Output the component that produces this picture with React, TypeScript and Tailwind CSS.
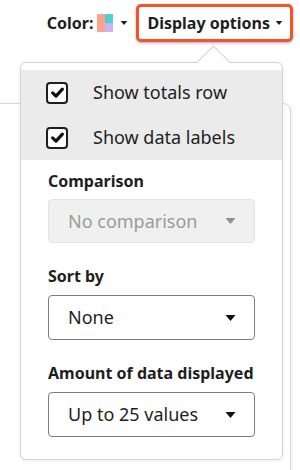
const Caret = ({className = ""}: {className?: string}) => (
  <svg viewBox="0 0 10 6" className={className} fill="currentColor">
    <path d="M0 0h10L5 6z" />
  </svg>
)

type SelectProps = {
  value: string
  disabled?: boolean
}

function Select({value, disabled}: SelectProps) {
  return (
    <div
      className={
        disabled
          ? "flex h-[44px] items-center justify-between rounded-[4px] border border-[#e3e3e3] bg-[#f0f0f0] pl-[19px] pr-[17px] text-[#9b9b9b]"
          : "flex h-[45px] items-center justify-between rounded-[4px] border border-[#7d7d7d] bg-white pl-[19px] pr-[17px] text-[#1e1e1e]"
      }
    >
      <span className="text-[18px]">{value}</span>
      <Caret className={disabled ? "h-[6px] w-[13px] text-[#8f8f8f]" : "h-[6px] w-[13px] text-[#111]"} />
    </div>
  )
}

function CheckRow({label}: {label: string}) {
  return (
    <div className="flex h-[45px] items-center pl-[25px]">
      <div className="flex h-[22px] w-[22px] items-center justify-center rounded-[4px] border-2 border-[#1e1e1e] bg-white">
        <svg viewBox="0 0 16 16" className="h-[15px] w-[15px]">
          <path
            d="M2.8 8.4 6.4 11.8 13.2 4.4"
            fill="none"
            stroke="#111"
            strokeWidth={3.4}
            strokeLinecap="round"
            strokeLinejoin="round"
          />
        </svg>
      </div>
      <span className="ml-[25px] text-[18px] text-[#1e1e1e]">{label}</span>
    </div>
  )
}

export default function App() {
  return (
    <div
      className="relative h-[470px] w-[300px] overflow-hidden bg-white text-[#1e1e1e]"
      style={{fontFamily: '"Noto Sans", "Open Sans", sans-serif'}}
    >
      {/* top bar */}
      <div className="flex h-[103px] items-start justify-end pr-[7px] pt-[4px]">
        <div className="flex h-[38px] items-center">
          <span className="text-[16px] font-bold">Color:</span>
          <div className="ml-[4px] flex h-[18px] w-[16px]">
            <div className="w-[8px] bg-[#fba489]" />
            <div className="flex w-[8px] flex-col">
              <div className="h-[9px] bg-[#4dd3ce]" />
              <div className="h-[9px] bg-[#c7b5f4]" />
            </div>
          </div>
          <Caret className="ml-[7px] h-[4px] w-[8px] text-[#1e1e1e]" />
        </div>
        <button className="ml-[8px] flex h-[38px] items-center rounded-[5px] border-[3px] border-[#f2552c] bg-white pl-[8px] pr-[7px] shadow-[0_1px_3px_rgba(0,0,0,0.35)]">
          <span className="text-[16px] font-bold">Display options</span>
          <Caret className="ml-[5px] h-[4px] w-[8px] text-[#1e1e1e]" />
        </button>
      </div>

      {/* card behind */}
      <div className="ml-[-10px] mr-[9px] h-[400px] rounded-tr-[8px] border border-[#d9d9d9] bg-white shadow-[2px_0_4px_rgba(0,0,0,0.06)]" />

      {/* popover */}
      <div className="absolute left-[20px] top-[62px] w-[263px] rounded-[6px] border border-[#d4d4d4] bg-white pb-[22px] shadow-[0_1px_4px_rgba(0,0,0,0.08)]">
        <div className="absolute left-[181px] top-[-13px] h-[23px] w-[23px] rotate-45 border-l border-t border-[#d4d4d4] bg-white" />
        <div className="relative mt-[7px] bg-[#ebebeb]">
          <CheckRow label="Show totals row" />
          <CheckRow label="Show data labels" />
        </div>
        <div className="flex flex-col px-[27px] pt-[10px]">
          <span className="text-[16px] font-bold leading-[22px]">Comparison</span>
          <div className="mt-[7px]">
            <Select value="No comparison" disabled />
          </div>
          <span className="mt-[22px] text-[16px] font-bold leading-[22px]">Sort by</span>
          <div className="mt-[8px]">
            <Select value="None" />
          </div>
          <span className="mt-[22px] text-[16px] font-bold leading-[22px]">Amount of data displayed</span>
          <div className="mt-[8px]">
            <Select value="Up to 25 values" />
          </div>
        </div>
      </div>
    </div>
  )
}
